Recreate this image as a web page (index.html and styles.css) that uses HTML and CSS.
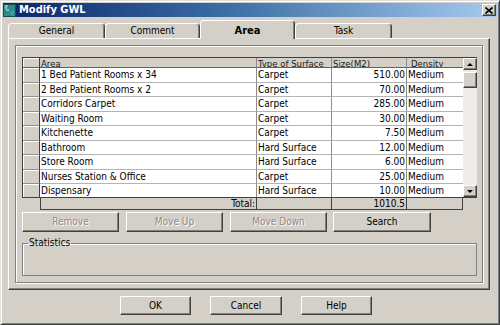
FILE: index.html
```html
<!DOCTYPE html>
<html>
<head>
<meta charset="utf-8">
<title>Modify GWL</title>
<link rel="stylesheet" href="styles.css">
</head>
<body>
<div class="window">
  <div class="titlebar">
    <svg class="appicon" width="13" height="13" viewBox="0 0 13 13">
      <rect x="0" y="0" width="13" height="13" fill="#2b8c8c"/>
      <rect x="0.5" y="0.5" width="12" height="12" fill="none" stroke="#0d4f55"/>
      <path d="M2 2h3M2 4h2M3 6h3" stroke="#d8f0f0" stroke-width="1"/>
      <path d="M7 8l3 3M9 7l2 2" stroke="#56c0b8" stroke-width="1"/>
    </svg>
    <span class="title">Modify GWL</span>
    <div class="closebtn">
      <svg width="8" height="7" viewBox="0 0 8 7"><path d="M0.5 0.5l7 6M7.5 0.5l-7 6" stroke="#000" stroke-width="1.6"/></svg>
    </div>
  </div>

  <div class="tabs">
    <div class="tab tab-general">General</div>
    <div class="tab tab-comment">Comment</div>
    <div class="tab tab-active">Area</div>
    <div class="tab tab-task">Task</div>
  </div>

  <div class="panel">
    <div class="inner">
      <div class="grid">
        <div class="rows">
          <div class="row head">
            <div class="rh"></div>
            <div class="c">Area</div>
            <div class="c">Type of Surface</div>
            <div class="c">Size(M2)</div>
            <div class="c c-dens">Density</div>
          </div>
          <div class="row"><div class="rh"></div><div class="c">1 Bed Patient Rooms x 34</div><div class="c">Carpet</div><div class="c num">510.00</div><div class="c c-last">Medium</div></div>
          <div class="row"><div class="rh"></div><div class="c">2 Bed Patient Rooms x 2</div><div class="c">Carpet</div><div class="c num">70.00</div><div class="c c-last">Medium</div></div>
          <div class="row"><div class="rh"></div><div class="c">Corridors Carpet</div><div class="c">Carpet</div><div class="c num">285.00</div><div class="c c-last">Medium</div></div>
          <div class="row"><div class="rh"></div><div class="c">Waiting Room</div><div class="c">Carpet</div><div class="c num">30.00</div><div class="c c-last">Medium</div></div>
          <div class="row"><div class="rh"></div><div class="c">Kitchenette</div><div class="c">Carpet</div><div class="c num">7.50</div><div class="c c-last">Medium</div></div>
          <div class="row"><div class="rh"></div><div class="c">Bathroom</div><div class="c">Hard Surface</div><div class="c num">12.00</div><div class="c c-last">Medium</div></div>
          <div class="row"><div class="rh"></div><div class="c">Store Room</div><div class="c">Hard Surface</div><div class="c num">6.00</div><div class="c c-last">Medium</div></div>
          <div class="row"><div class="rh"></div><div class="c">Nurses Station &amp; Office</div><div class="c">Carpet</div><div class="c num">25.00</div><div class="c c-last">Medium</div></div>
          <div class="row"><div class="rh"></div><div class="c">Dispensary</div><div class="c">Hard Surface</div><div class="c num">10.00</div><div class="c c-last">Medium</div></div>
        </div>
        <div class="vscroll">
          <div class="sb-btn"><span class="arrow-up"></span></div>
          <div class="sb-thumb"></div>
          <div class="sb-track"></div>
          <div class="sb-btn"><span class="arrow-down"></span></div>
        </div>
      </div>

      <div class="totals">
        <div class="t num">Total:</div>
        <div class="t"></div>
        <div class="t num">1010.5</div>
        <div class="t"></div>
      </div>

      <div class="actions">
        <div class="btn btn-wide disabled">Remove</div>
        <div class="btn btn-wide disabled">Move Up</div>
        <div class="btn btn-wide disabled">Move Down</div>
        <div class="btn btn-wide btn-search">Search</div>
      </div>

      <fieldset class="stats">
        <legend>Statistics</legend>
      </fieldset>
    </div>
  </div>

  <div class="footer">
    <div class="btn btn-foot">OK</div>
    <div class="btn btn-foot btn-cancel">Cancel</div>
    <div class="btn btn-foot">Help</div>
  </div>
</div>
</body>
</html>
```

FILE: styles.css
```css
html, body {
  margin: 0;
  padding: 0;
}

body {
  width: 500px;
  height: 325px;
  overflow: hidden;
  background: #d4d0c8;
  font-family: "DejaVu Sans Condensed", "Liberation Sans", Arial, sans-serif;
  font-size: 10px;
  color: #000;
}

.window {
  box-sizing: border-box;
  width: 500px;
  height: 325px;
  border: 1px solid;
  border-color: #dfdfdf #404040 #404040 #dfdfdf;
  box-shadow: inset 1px 1px #ffffff, inset -1px -1px #808080;
  padding: 2px;
  display: flex;
  flex-direction: column;
}

/* ---------- title bar ---------- */
.titlebar {
  height: 14px;
  flex: none;
  display: flex;
  align-items: center;
  background: linear-gradient(to right, #0a246a 0%, #3a6ea5 45%, #a6caf0 100%);
}

.appicon {
  display: block;
  flex: none;
}

.title {
  margin-left: 3px;
  color: #fff;
  font-weight: bold;
  font-size: 11px;
  line-height: 14px;
}

.closebtn {
  margin-left: auto;
  margin-right: 1px;
  width: 14px;
  height: 12px;
  box-sizing: border-box;
  background: #d4d0c8;
  border: 1px solid;
  border-color: #fff #404040 #404040 #fff;
  box-shadow: inset -1px -1px #808080;
  display: flex;
  align-items: center;
  justify-content: center;
}

.closebtn svg {
  display: block;
}

/* ---------- tabs ---------- */
.tabs {
  display: flex;
  align-items: flex-end;
  height: 19px;
  flex: none;
  margin-top: 3px;
  margin-left: 5px;
  margin-bottom: -1px;
  position: relative;
  z-index: 1;
}

.tab {
  box-sizing: border-box;
  height: 15px;
  margin-bottom: 1px;
  border: 1px solid;
  border-bottom: none;
  border-color: #fff #404040 transparent #fff;
  border-radius: 4px 4px 0 0;
  box-shadow: inset -1px 0 #808080;
  background: #d4d0c8;
  text-align: center;
  line-height: 14px;
  font-size: 10px;
}

.tab-general { width: 97px; }
.tab-comment { width: 95px; }
.tab-task { width: 97px; }

.tab-active {
  width: 95px;
  height: 19px;
  margin-bottom: 0;
  font-weight: bold;
  font-size: 11px;
  line-height: 19px;
}

/* ---------- panel ---------- */
.panel {
  box-sizing: border-box;
  margin-left: 5px;
  width: 482px;
  height: 252px;
  flex: none;
  border: 1px solid;
  border-color: #fff #404040 #404040 #fff;
  box-shadow: inset -1px -1px #808080;
  padding: 6px;
}

.inner {
  box-sizing: border-box;
  height: 238px;
  border: 1px solid #808080;
  box-shadow: inset 1px 1px #fff, 1px 1px #fff;
  padding: 11px 5px 0 6px;
}

/* ---------- grid ---------- */
.grid {
  box-sizing: border-box;
  display: flex;
  height: 141px;
  border-top: 1px solid #404040;
  border-left: 1px solid #404040;
  border-bottom: 1px solid #404040;
}

.rows {
  width: 440px;
  flex: none;
  overflow: hidden;
  display: flex;
  flex-direction: column;
  background: #fff;
}

.row {
  display: grid;
  grid-template-columns: 17px 217px 75px 75px 56px;
  height: 14.5px;
  flex: none;
}

.rh {
  box-sizing: border-box;
  background: #d4d0c8;
  border-right: 1px solid #404040;
  border-bottom: 1px solid #909090;
  box-shadow: inset 1px 1px #fff;
}

.c {
  box-sizing: border-box;
  border-right: 1px solid #8c8c8c;
  border-bottom: 1px solid #b4b4b4;
  padding: 0 1px;
  line-height: 14px;
  white-space: nowrap;
  overflow: hidden;
}

.c-last {
  border-right: none;
}

.num {
  text-align: right;
}

.head {
  height: 10px;
}

.head .c {
  background: #d4d0c8;
  border-bottom: 1px solid #606060;
  line-height: 11px;
  font-size: 9.5px;
  color: #202020;
}

.head .c-dens {
  border-right: none;
  padding-left: 4px;
}

.head .rh {
  border-bottom: 1px solid #606060;
}

/* ---------- scrollbar ---------- */
.vscroll {
  width: 14px;
  flex: none;
  display: flex;
  flex-direction: column;
  background: #eeece8;
}

.sb-btn,
.sb-thumb {
  box-sizing: border-box;
  background: #d4d0c8;
  border: 1px solid;
  border-color: #fff #404040 #404040 #fff;
  box-shadow: inset -1px -1px #808080;
}

.sb-btn {
  height: 12px;
  flex: none;
  display: flex;
  align-items: center;
  justify-content: center;
}

.sb-thumb {
  height: 16px;
  margin-top: 2px;
  flex: none;
}

.sb-track {
  flex: 1;
}

.arrow-up,
.arrow-down {
  width: 0;
  height: 0;
  border-left: 3px solid transparent;
  border-right: 3px solid transparent;
}

.arrow-up {
  border-bottom: 3px solid #000;
}

.arrow-down {
  border-top: 3px solid #000;
}

/* ---------- totals ---------- */
.totals {
  box-sizing: border-box;
  margin-left: 18px;
  width: 423px;
  height: 12px;
  display: grid;
  grid-template-columns: 216px 75px 75px 56px;
  border-left: 1px solid #404040;
  border-bottom: 1px solid #404040;
}

.t {
  box-sizing: border-box;
  border-right: 1px solid #404040;
  padding: 0 1px;
  line-height: 11px;
  white-space: nowrap;
}

/* ---------- buttons ---------- */
.btn {
  box-sizing: border-box;
  background: #d4d0c8;
  border: 1px solid;
  border-color: #fff #404040 #404040 #fff;
  box-shadow: inset -1px -1px #808080;
  text-align: center;
}

.actions {
  display: flex;
  gap: 7px;
  margin-top: 2px;
}

.btn-wide {
  width: 97px;
  height: 20px;
  line-height: 18px;
}

.btn-search {
  width: 98px;
  margin-left: -1px;
}

.disabled {
  color: #8c8c8c;
  text-shadow: 1px 1px #fff;
}

/* ---------- statistics group ---------- */
.stats {
  box-sizing: border-box;
  margin: 5px 0 0 0;
  padding: 0;
  height: 39px;
  border: 1px solid #808080;
  box-shadow: inset 1px 1px #fff;
}

.stats legend {
  margin-left: 5px;
  padding: 0 1px;
  line-height: 12px;
  font-size: 10px;
}

/* ---------- footer ---------- */
.footer {
  display: flex;
  gap: 19px;
  margin-top: 6px;
  padding-left: 117px;
}

.btn-foot {
  width: 71px;
  height: 19px;
  line-height: 17px;
}

.btn-cancel {
  width: 72px;
}
```
